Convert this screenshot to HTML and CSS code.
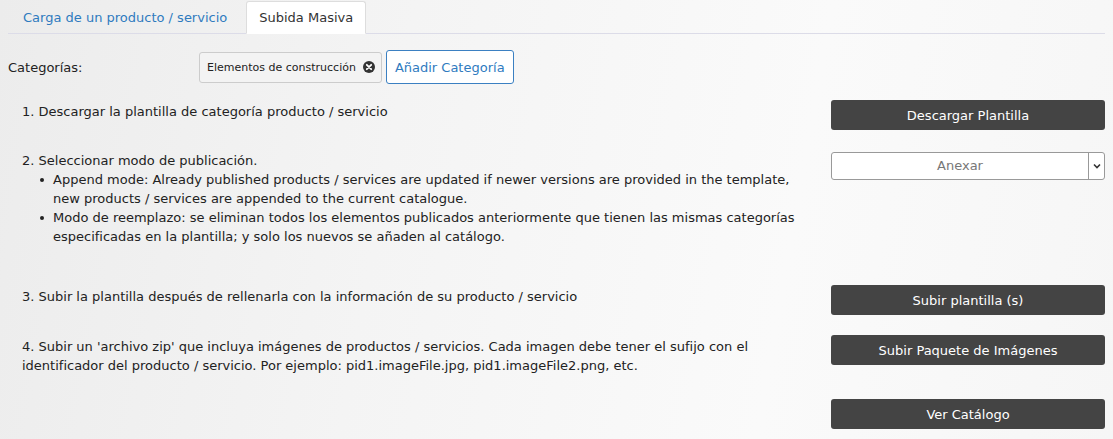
FILE: index.html
```html
<!DOCTYPE html>
<html lang="es">
<head>
    <meta charset="UTF-8">
    <title>Subida Masiva</title>
    <link rel="stylesheet" href="styles.css">
</head>
<body>
    <div class="page">
        <ul class="tabs">
            <li class="tab"><a href="#">Carga de un producto / servicio</a></li>
            <li class="tab active"><a href="#">Subida Masiva</a></li>
        </ul>

        <div class="categories">
            <span class="cat-label">Categorías:</span>
            <span class="chip">Elementos de construcción
                <svg class="chip-x" width="12" height="12" viewBox="0 0 12 12">
                    <circle cx="6" cy="6" r="6" fill="#333"/>
                    <path d="M3.8 3.8 L8.2 8.2 M8.2 3.8 L3.8 8.2" stroke="#fff" stroke-width="1.8" stroke-linecap="round"/>
                </svg>
            </span>
            <button class="btn-outline">Añadir Categoría</button>
        </div>

        <div class="step step-1">
            <div class="step-text">1. Descargar la plantilla de categoría producto / servicio</div>
            <div class="step-action"><button class="btn-dark">Descargar Plantilla</button></div>
        </div>

        <div class="step step-2">
            <div class="step-text">
                2. Seleccionar modo de publicación.
                <ul class="modes">
                    <li>Append mode: Already published products / services are updated if newer versions are provided in the template, new products / services are appended to the current catalogue.</li>
                    <li>Modo de reemplazo: se eliminan todos los elementos publicados anteriormente que tienen las mismas categorías especificadas en la plantilla; y solo los nuevos se añaden al catálogo.</li>
                </ul>
            </div>
            <div class="step-action">
                <div class="select">
                    <span class="select-value">Anexar</span>
                    <span class="select-arrow">
                        <svg width="8" height="6" viewBox="0 0 8 6"><path d="M1 1.5 L4 4.5 L7 1.5" fill="none" stroke="#333" stroke-width="1.6"/></svg>
                    </span>
                </div>
            </div>
        </div>

        <div class="step step-3">
            <div class="step-text">3. Subir la plantilla después de rellenarla con la información de su producto / servicio</div>
            <div class="step-action"><button class="btn-dark">Subir plantilla (s)</button></div>
        </div>

        <div class="step step-4">
            <div class="step-text">4. Subir un 'archivo zip' que incluya imágenes de productos / servicios. Cada imagen debe tener el sufijo con el identificador del producto / servicio. Por ejemplo: pid1.imageFile.jpg, pid1.imageFile2.png, etc.</div>
            <div class="step-action"><button class="btn-dark">Subir Paquete de Imágenes</button></div>
        </div>

        <div class="step step-5">
            <div class="step-text"></div>
            <div class="step-action"><button class="btn-dark">Ver Catálogo</button></div>
        </div>
    </div>
</body>
</html>
```

FILE: styles.css
```css
body {
    margin: 0;
    font-family: "DejaVu Sans", Verdana, sans-serif;
    font-size: 13px;
    color: #222;
    background: linear-gradient(100deg, #ececec 0%, #f4f4f4 35%, #fafafa 70%, #f6f6f6 100%);
    height: 439px;
    overflow: hidden;
}
.page {
    padding: 1px 8px 0 8px;
}
.tabs {
    display: flex;
    list-style: none;
    margin: 0;
    padding: 0;
    border-bottom: 1px solid #dcdce8;
    width: 1097px;
}
.tab {
    margin-right: 4px;
}
.tab a {
    display: block;
    padding: 8px 14px 8px 14px;
    color: #2f7bbf;
    text-decoration: none;
    border: 1px solid transparent;
    border-radius: 3px 3px 0 0;
    margin-bottom: -1px;
}
.tab.active a {
    color: #333;
    background: #fff;
    border-color: #ddd #ddd #fff #ddd;
    padding-left: 12px;
    padding-right: 12px;
}
.categories {
    display: flex;
    align-items: center;
    margin-top: 16px;
    height: 34px;
}
.cat-label {
    width: 191px;
}
.chip {
    display: inline-flex;
    align-items: center;
    gap: 7px;
    height: 31px;
    padding: 0 6px 0 7px;
    border: 1px solid #ccc;
    border-radius: 3px;
    background: #f3f3f3;
    font-size: 11px;
    box-sizing: border-box;
}
.btn-outline {
    margin-left: 4px;
    height: 34px;
    padding: 0 8px;
    border: 1px solid #3b80c2;
    border-radius: 3px;
    background: #fff;
    color: #2f7bbf;
    font: inherit;
}
.step {
    display: flex;
    justify-content: space-between;
}
.step-text {
    width: 790px;
    padding-left: 14px;
    line-height: 19px;
}
.step-action {
    width: 274px;
}
.step-1 {
    margin-top: 16px;
}
.step-1 .step-text {
    padding-top: 2px;
}
.step-2 {
    margin-top: 21px;
}
.step-2 .step-action {
    padding-top: 1px;
}
.step-3 {
    margin-top: 39px;
}
.step-3 .step-text,
.step-4 .step-text {
    padding-top: 2px;
}
.step-4 {
    margin-top: 20px;
}
.step-5 {
    margin-top: 24px;
}
.modes {
    margin: 0;
    padding-left: 31px;
    list-style: none;
}
.modes li {
    position: relative;
}
.modes li::before {
    content: "";
    position: absolute;
    left: -13px;
    top: 8px;
    width: 4px;
    height: 4px;
    border-radius: 50%;
    background: #222;
}
.btn-dark {
    display: block;
    width: 274px;
    height: 30px;
    border: none;
    border-radius: 3px;
    background: #444;
    color: #fff;
    font: inherit;
}
.select {
    display: flex;
    height: 28px;
    border: 1px solid #999;
    border-radius: 3px;
    background: #fff;
    box-sizing: border-box;
}
.select-value {
    flex: 1;
    text-align: center;
    line-height: 26px;
    color: #777;
}
.select-arrow {
    display: flex;
    align-items: center;
    justify-content: center;
    width: 15px;
    border-left: 1px solid #999;
}
```
